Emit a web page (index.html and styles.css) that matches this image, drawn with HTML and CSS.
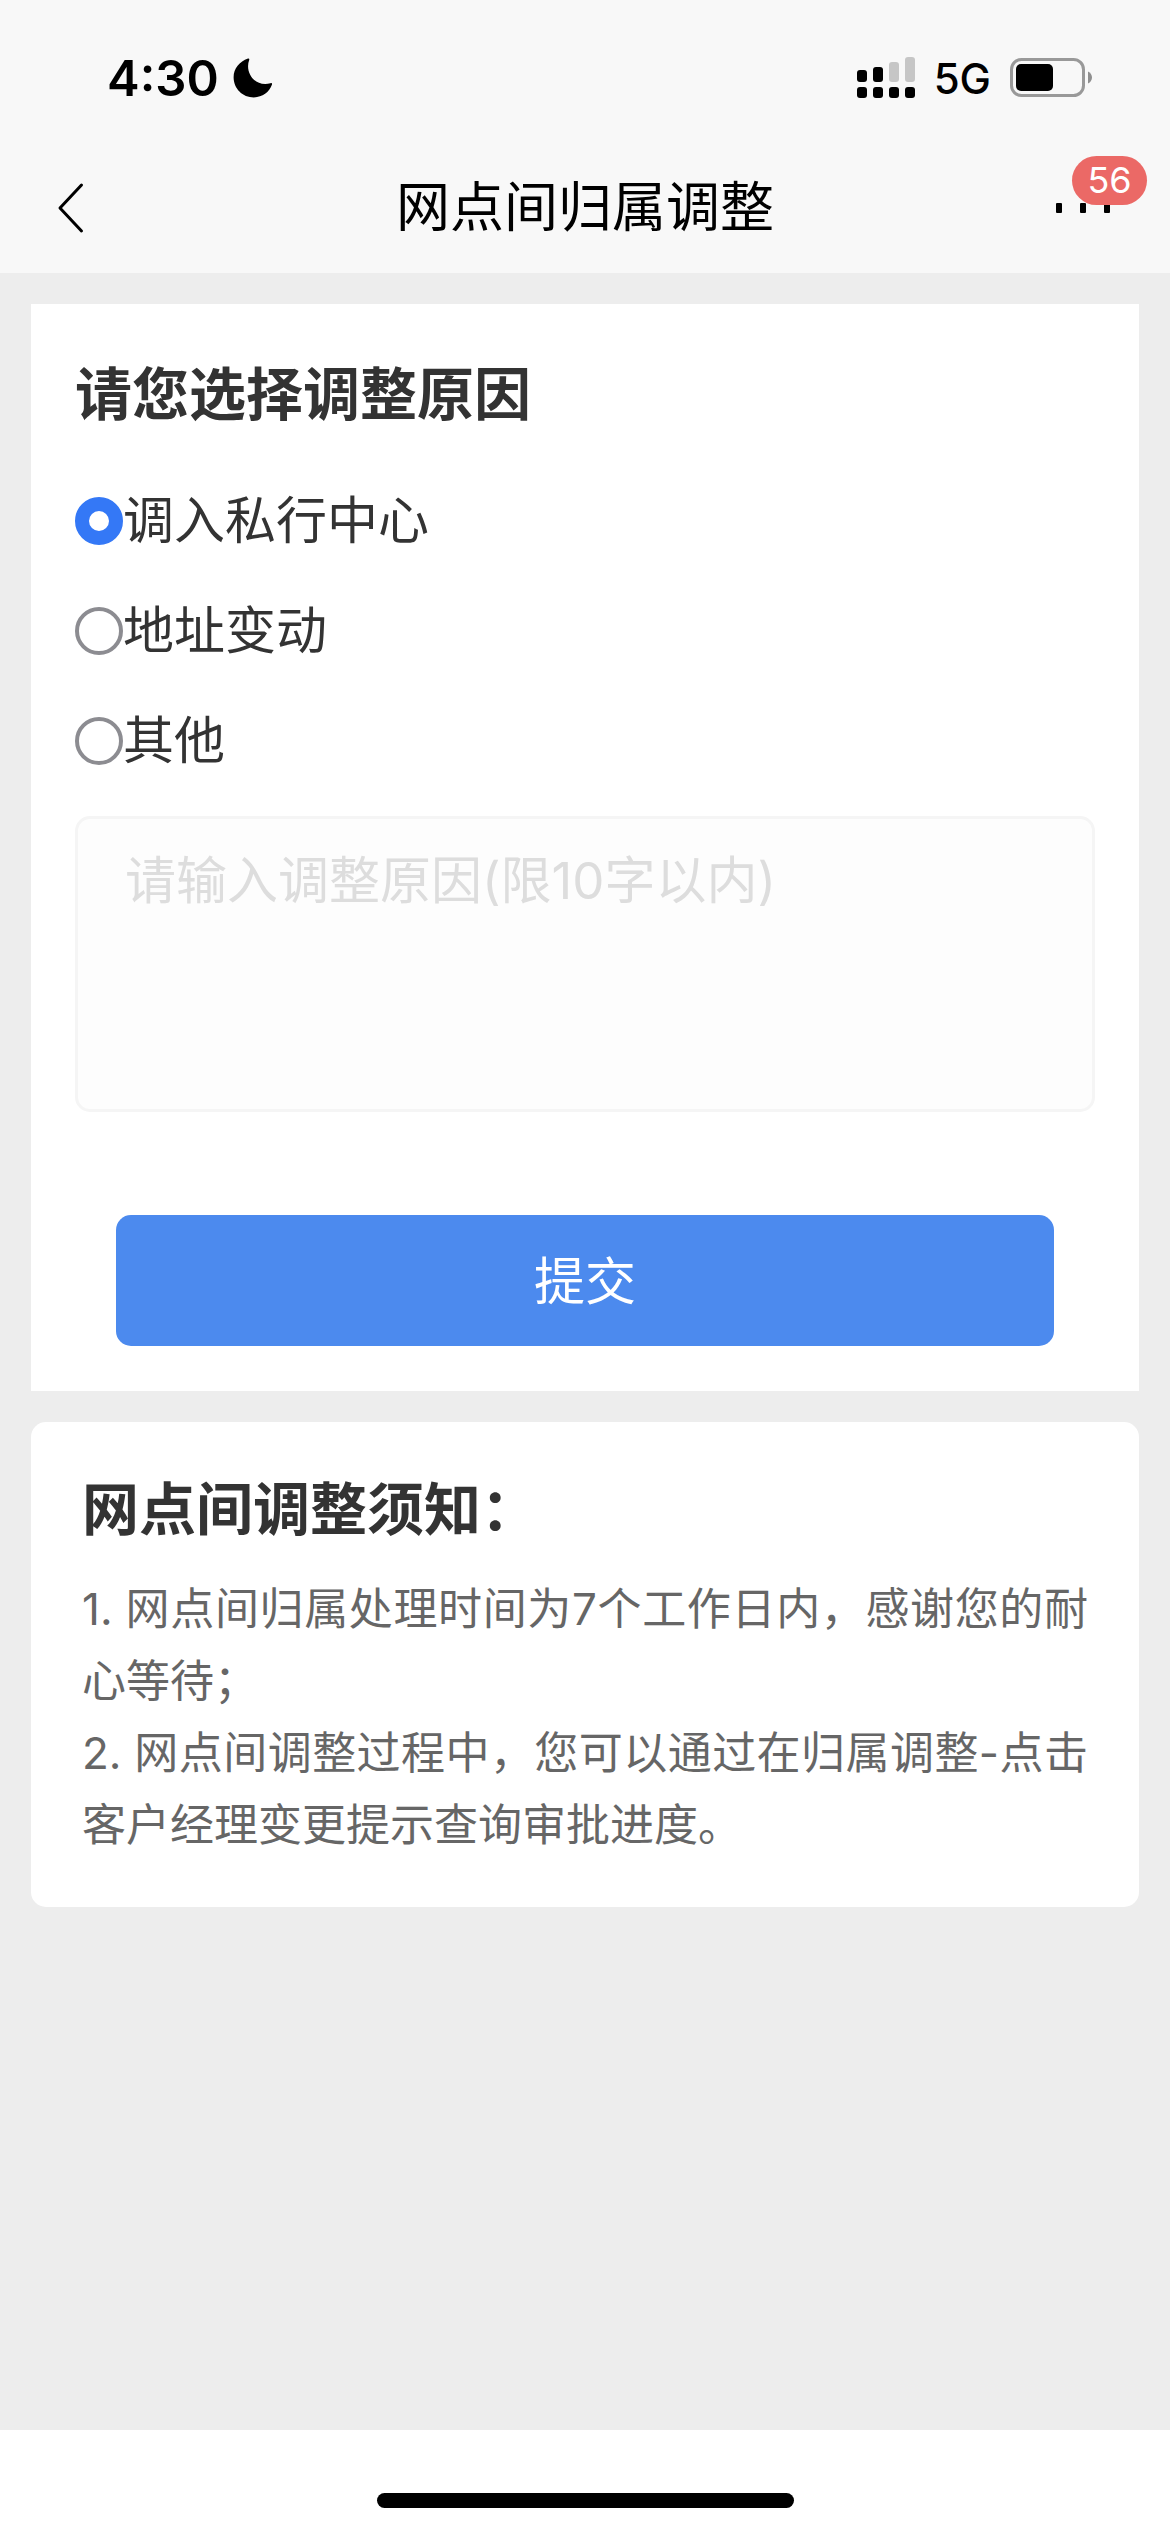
FILE: index.html
```html
<!DOCTYPE html>
<html lang="zh-CN">
<head>
    <meta charset="UTF-8">
    <meta name="viewport" content="width=device-width, initial-scale=1.0">
    <title>网点间归属调整</title>
    <link rel="stylesheet" href="styles.css">
</head>
<body>
    <div class="status-bar">
        <div class="status-left">
            <span class="status-time">4:30</span>
            <svg width="40" height="40" viewBox="0 0 40 40" aria-hidden="true">
                <path d="M15 0.6C16 0.2 16.6 1 16.2 2C11.5 14.5 22 29.5 37.5 25.2C38.8 24.8 39.4 25.5 39 26.6C36.3 34.2 29.4 39.4 21 39.4C9.6 39.4 0.6 30.5 0.6 19.2C0.6 10.7 6.5 3.6 15 0.6Z"/>
            </svg>
        </div>
        <div class="status-right">
            <svg width="58" height="42" viewBox="0 0 58 42" aria-hidden="true">
                <rect x="0" y="13" width="10" height="12" rx="3"/>
                <rect x="16" y="10" width="10" height="15" rx="3"/>
                <rect x="32" y="5" width="10" height="20" rx="3" fill="#c6c6c6"/>
                <rect x="48" y="0" width="10" height="25" rx="3" fill="#c6c6c6"/>
                <rect x="0" y="30" width="10" height="11" rx="3"/>
                <rect x="16" y="30" width="10" height="11" rx="3"/>
                <rect x="32" y="30" width="10" height="11" rx="3"/>
                <rect x="48" y="30" width="10" height="11" rx="3"/>
            </svg>
            <span class="status-network">5G</span>
            <svg width="83" height="40" viewBox="0 0 83 40" aria-hidden="true">
                <rect x="1.5" y="1.5" width="72" height="36" rx="10" fill="none" stroke="#999" stroke-width="3"/>
                <rect x="6" y="6" width="37" height="27" rx="5"/>
                <path d="M78 13.5C80.5 14.5 82 17 82 19.5C82 22 80.5 24.5 78 25.5Z" fill="#8f8f8f"/>
            </svg>
        </div>
    </div>

    <header class="nav-bar">
        <button class="nav-btn" type="button" aria-label="返回">
            <svg width="28" height="52" viewBox="0 0 28 52" aria-hidden="true">
                <path d="M25.5 3L4 26L25.5 49" fill="none" stroke="#000" stroke-width="3" stroke-linecap="round" stroke-linejoin="round"/>
            </svg>
        </button>
        <h1 class="nav-title">网点间归属调整</h1>
        <button class="nav-btn nav-more" type="button" aria-label="更多">
            <svg width="54" height="10" viewBox="0 0 54 10" aria-hidden="true">
                <rect x="0" y="0" width="6" height="10" rx="1"/>
                <rect x="24" y="0" width="6" height="10" rx="1"/>
                <rect x="48" y="0" width="6" height="10" rx="1"/>
            </svg>
            <span class="badge">56</span>
        </button>
    </header>

    <main class="content">
        <form class="card reason-form">
            <h2 class="card-title" id="reasonTitle">请您选择调整原因</h2>
            <div class="options" role="radiogroup" aria-labelledby="reasonTitle">
                <label class="option">
                    <input type="radio" name="reason" value="center" checked>
                    <span>调入私行中心</span>
                </label>
                <label class="option">
                    <input type="radio" name="reason" value="address">
                    <span>地址变动</span>
                </label>
                <label class="option">
                    <input type="radio" name="reason" value="other">
                    <span>其他</span>
                </label>
            </div>
            <textarea class="reason-input" maxlength="10" aria-label="调整原因" placeholder="请输入调整原因(限10字以内)"></textarea>
            <button class="submit-btn" type="button">提交</button>
        </form>

        <section class="card notice">
            <h2 class="card-title">网点间调整须知：</h2>
            <p>1. 网点间归属处理时间为7个工作日内，感谢您的耐心等待；</p>
            <p>2. 网点间调整过程中，您可以通过在归属调整-点击客户经理变更提示查询审批进度。</p>
        </section>
    </main>

    <footer class="home-area">
        <div class="home-indicator"></div>
    </footer>
</body>
</html>
```
FILE: styles.css
```css
* {
    box-sizing: border-box;
}

body {
    display: flex;
    flex-direction: column;
    min-height: 100vh;
    margin: 0;
    background-color: #ededed;
    color: #333;
    font-family: Inter, "Noto Sans CJK SC", sans-serif;
}

h1, h2, p {
    margin: 0;
}

button, textarea {
    font-family: inherit;
}

/* Status bar */
.status-bar {
    display: flex;
    justify-content: space-between;
    align-items: center;
    height: 143px;
    padding: 13px 77px 0 107px;
    background-color: #f8f8f8;
    color: #000;
}

.status-left,
.status-right {
    display: flex;
    align-items: center;
}

.status-left {
    gap: 14px;
}

.status-right {
    gap: 19px;
}

.status-time {
    font-size: 49px;
    font-weight: 600;
}

.status-network {
    font-size: 42px;
    font-weight: 500;
}

/* Navigation bar */
.nav-bar {
    display: flex;
    justify-content: space-between;
    align-items: center;
    height: 130px;
    padding: 0 56px;
    background-color: #f8f8f8;
    color: #000;
}

.nav-title {
    font-size: 54px;
    font-weight: 400;
    line-height: 80px;
}

.nav-btn {
    display: flex;
    align-items: center;
    width: 58px;
    height: 58px;
    padding: 0;
    border: none;
    background: none;
    cursor: pointer;
}

.nav-more {
    position: relative;
}

.badge {
    position: absolute;
    top: -23px;
    left: 16px;
    width: 75px;
    border-radius: 25px;
    background-color: #eb6966;
    color: white;
    font-size: 36px;
    line-height: 49px;
    text-align: center;
}

/* Cards */
.content {
    flex: 1;
    display: flex;
    flex-direction: column;
    gap: 31px;
    padding: 31px;
}

.card {
    background-color: white;
}

.card-title {
    font-size: 57px;
    font-weight: 600;
    line-height: 80px;
}

/* Reason form */
.reason-form {
    display: flex;
    flex-direction: column;
    padding: 51px 44px 45px;
}

.options {
    margin: 31px 0 20px;
}

.option {
    display: flex;
    align-items: center;
    height: 110px;
    font-size: 51px;
    line-height: 72px;
}

.option input {
    appearance: none;
    width: 48px;
    height: 48px;
    margin: 0;
    border: 4px solid #8c8c91;
    border-radius: 50%;
    background-color: white;
}

.option input:checked {
    border: 14px solid #3478f6;
}

.reason-input {
    display: block;
    width: 100%;
    height: 296px;
    padding: 26px 47px;
    border: 3px solid #f5f5f5;
    border-radius: 15px;
    background-color: #fdfdfd;
    color: #333;
    font-size: 51px;
    line-height: 72px;
    resize: none;
}

.reason-input::placeholder {
    color: #ddd;
}

.submit-btn {
    height: 131px;
    margin: 103px 41px 0;
    padding: 0 0 6px;
    border: none;
    border-radius: 15px;
    background-color: #4c8aee;
    color: white;
    font-size: 51px;
    cursor: pointer;
}

/* Notice */
.notice {
    padding: 48px 51px 46px;
    border-radius: 15px;
}

.notice .card-title {
    margin-bottom: 23px;
}

.notice p {
    color: #666;
    font-size: 44px;
    line-height: 72px;
    text-align: justify;
}

/* Home indicator */
.home-area {
    height: 102px;
    padding-top: 63px;
    background-color: white;
}

.home-indicator {
    width: 417px;
    height: 15px;
    margin: 0 auto;
    border-radius: 8px;
    background-color: #000;
}
```
